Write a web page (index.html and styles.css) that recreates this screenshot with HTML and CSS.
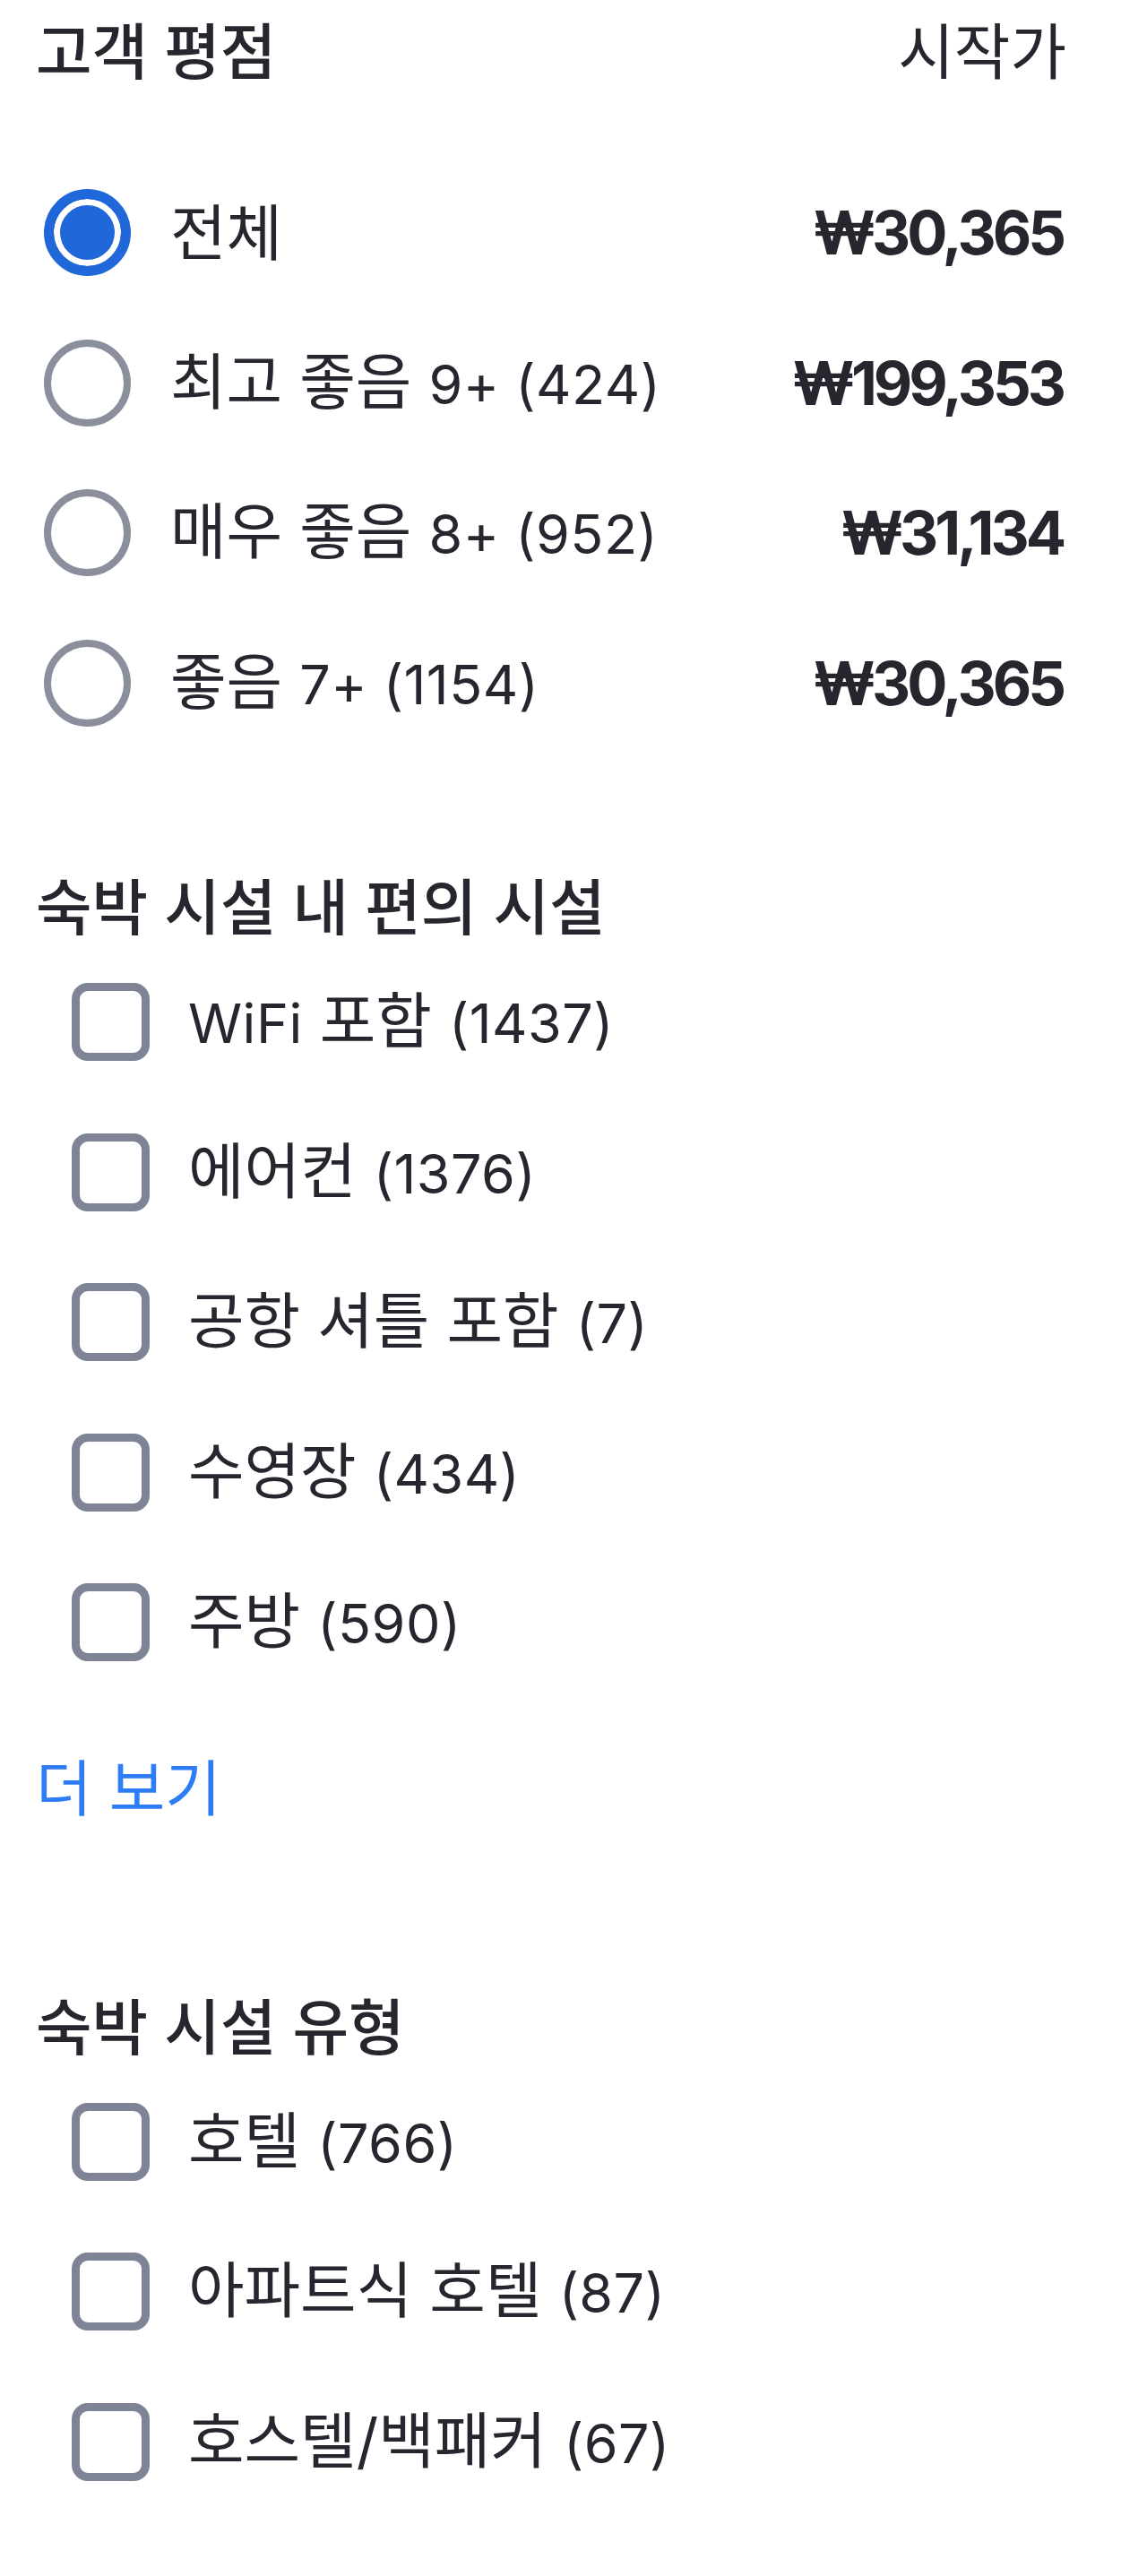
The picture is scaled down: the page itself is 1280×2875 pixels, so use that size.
FILE: index.html
```html
<!DOCTYPE html>
<html lang="ko">
<head>
    <meta charset="UTF-8">
    <meta name="viewport" content="width=device-width, initial-scale=1.0">
    <title>필터</title>
    <link rel="stylesheet" href="styles.css">
</head>
<body>
    <div class="filter-panel">
        <!-- 고객 평점 -->
        <div class="filter-section rating-section">
            <div class="section-head">
                <h3 class="section-title">고객 평점</h3>
                <span class="head-note">시작가</span>
            </div>
            <label class="radio-row">
                <span class="radio checked"></span>
                <span class="row-label">전체</span>
                <span class="row-price">₩30,365</span>
            </label>
            <label class="radio-row">
                <span class="radio"></span>
                <span class="row-label">최고 좋음 <span class="latin">9+ (424)</span></span>
                <span class="row-price">₩199,353</span>
            </label>
            <label class="radio-row">
                <span class="radio"></span>
                <span class="row-label">매우 좋음 <span class="latin">8+ (952)</span></span>
                <span class="row-price">₩31,134</span>
            </label>
            <label class="radio-row">
                <span class="radio"></span>
                <span class="row-label">좋음 <span class="latin">7+ (1154)</span></span>
                <span class="row-price">₩30,365</span>
            </label>
        </div>

        <!-- 숙박 시설 내 편의 시설 -->
        <div class="filter-section amenity-section">
            <h3 class="section-title">숙박 시설 내 편의 시설</h3>
            <label class="check-row"><span class="checkbox"></span><span class="row-label"><span class="latin">WiFi</span> 포함 <span class="latin">(1437)</span></span></label>
            <label class="check-row"><span class="checkbox"></span><span class="row-label">에어컨 <span class="latin">(1376)</span></span></label>
            <label class="check-row"><span class="checkbox"></span><span class="row-label">공항 셔틀 포함 <span class="latin">(7)</span></span></label>
            <label class="check-row"><span class="checkbox"></span><span class="row-label">수영장 <span class="latin">(434)</span></span></label>
            <label class="check-row"><span class="checkbox"></span><span class="row-label">주방 <span class="latin">(590)</span></span></label>
            <a class="more-link" href="#">더 보기</a>
        </div>

        <!-- 숙박 시설 유형 -->
        <div class="filter-section type-section">
            <h3 class="section-title">숙박 시설 유형</h3>
            <label class="check-row"><span class="checkbox"></span><span class="row-label">호텔 <span class="latin">(766)</span></span></label>
            <label class="check-row"><span class="checkbox"></span><span class="row-label">아파트식 호텔 <span class="latin">(87)</span></span></label>
            <label class="check-row"><span class="checkbox"></span><span class="row-label">호스텔/백패커 <span class="latin">(67)</span></span></label>
        </div>
    </div>
</body>
</html>
```

FILE: styles.css
```css
body {
    margin: 0;
    background-color: #ffffff;
    font-family: Inter, "Noto Sans CJK KR", sans-serif;
    color: #25262e;
}
.filter-panel {
    width: 1150px;
    padding: 18px 0 60px 40px;
}
.section-title {
    margin: 0;
    font-size: 68px;
    font-weight: 500;
    line-height: 80px;
}
.section-head {
    display: flex;
    justify-content: space-between;
    align-items: center;
    margin-bottom: 78px;
}
.head-note {
    font-size: 68px;
    line-height: 80px;
}
.radio-row,
.check-row {
    display: flex;
    align-items: center;
    height: 167.5px;
    cursor: pointer;
}
.row-label {
    font-size: 68px;
    line-height: 80px;
}
.row-label .latin {
    font-size: 61px;
    letter-spacing: 0.5px;
}
.row-price {
    margin-left: auto;
    font-size: 67px;
    font-weight: 700;
    letter-spacing: -4px;
    padding-right: 4px;
}
.radio {
    box-sizing: border-box;
    width: 97px;
    height: 97px;
    margin: 0 44px 0 9px;
    border: 8px solid #8b8e9c;
    border-radius: 50%;
    flex-shrink: 0;
}
.radio.checked {
    border: 11px solid #2067da;
    background-color: #2067da;
    box-shadow: inset 0 0 0 7px #ffffff;
}
.amenity-section {
    margin-top: 127px;
}
.type-section {
    margin-top: 187px;
}
.amenity-section .section-title,
.type-section .section-title {
    margin-bottom: 4px;
}
.checkbox {
    box-sizing: border-box;
    width: 87px;
    height: 87px;
    margin: 0 43px 0 40px;
    border: 9px solid #7f8396;
    border-radius: 18px;
    flex-shrink: 0;
}
.more-link {
    display: block;
    margin-top: 61px;
    font-size: 68px;
    line-height: 80px;
    color: #2e7cf6;
    text-decoration: none;
}
```
